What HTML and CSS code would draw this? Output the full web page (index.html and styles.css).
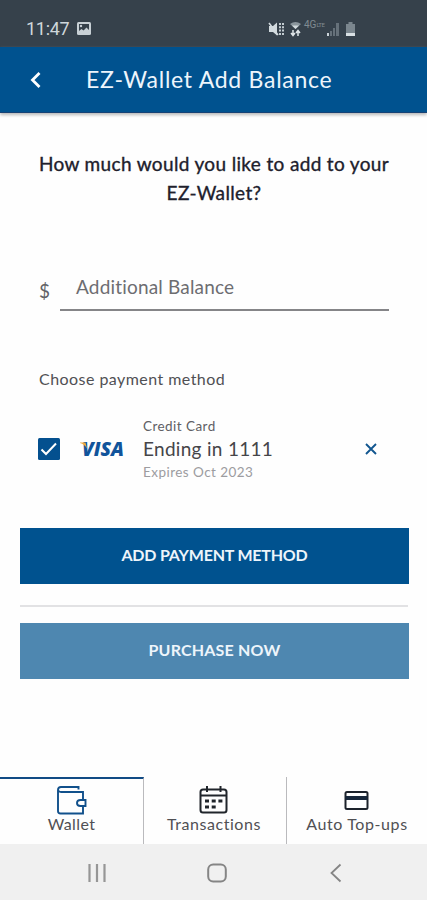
FILE: index.html
```html
<!DOCTYPE html>
<html lang="en">
<head>
<meta charset="utf-8">
<title>EZ-Wallet Add Balance</title>
<link rel="stylesheet" href="styles.css">
</head>
<body>
<div class="status">
  <span class="time">11:47</span>
  <svg class="photo" width="16" height="15" viewBox="0 0 16 15"><rect x="1" y="1" width="14" height="13" rx="1.500" fill="#c8d0d5"/><path d="M3 3h10v6l-2.500-2.500-3 3L5.500 8 3 10z" fill="#36414b"/><circle cx="5" cy="5" r="1.200" fill="#c8d0d5"/></svg>
  <div class="indicators">
    <svg width="17" height="16" viewBox="0 0 17 16"><path d="M1 5h4L9 1.500v13L5 11H1z" fill="#d2dade"/><path d="M1 2l9 12" stroke="#d2dade" stroke-width="1.500"/><path d="M12 2v12M15 2v12" stroke="#c3ccd1" stroke-width="2" stroke-dasharray="2 1.300"/></svg>
    <svg width="13" height="16" viewBox="0 0 13 16"><path d="M1 3q5.500-4 11 0L6.500 8z" fill="#8b969d"/><path d="M3 4.500h7L6.500 8z" fill="#d2dade"/><path d="M4 9v5M2 12l2 2.500L6 12M9 15v-5M7 12l2-2.500 2 2.500" fill="none" stroke="#e0e6e9" stroke-width="1.500"/></svg>
    <span class="lte">4G<small>LTE</small></span>
    <svg width="14" height="16" viewBox="0 0 14 16"><path d="M1 12h2v3H1z" fill="#cbd3d8"/><path d="M4 10h2v5H4zM7 7h2v8H7zM10 2h3v13h-3z" fill="#66717a"/></svg>
    <svg class="battery" width="11" height="16" viewBox="0 0 11 16"><path d="M3.500 1h4v2H10v12H1V3h2.500z" fill="#7b868e"/><path d="M1 12h9v3H1z" fill="#d9e0e4"/></svg>
  </div>
</div>
<header class="header">
  <svg width="14" height="18" viewBox="0 0 14 18"><path d="M11.500 2L4.500 9l7 7" fill="none" stroke="#fff" stroke-width="2.800"/></svg>
  <h1>EZ-Wallet Add Balance</h1>
</header>
<main>
  <h2>How much would you like to add to your<br>EZ-Wallet?</h2>
  <div class="amount"><span class="dollar">$</span><div class="field">Additional Balance</div></div>
  <p class="choose">Choose payment method</p>
  <div class="card">
    <svg class="check" width="22" height="22" viewBox="0 0 22 22"><rect width="22" height="22" rx="1.500" fill="#04508f"/><path d="M3.500 11.500l4.500 4.500L18 5.500" fill="none" stroke="#fff" stroke-width="2"/></svg>
    <svg class="visa" width="46" height="28" viewBox="0 -5 46 28"><text x="2" y="16" textLength="42" lengthAdjust="spacingAndGlyphs">VISA</text><path d="M0 2.500h5.500l1.500 6Q4.500 4 0 3z" fill="#eeaa3d"/></svg>
    <div class="details"><span class="kind">Credit Card</span><span class="ending">Ending in 1111</span><span class="expires">Expires Oct 2023</span></div>
    <svg class="remove" width="12" height="12" viewBox="0 0 12 12"><path d="M1 1l10 10M11 1L1 11" stroke="#12568f" stroke-width="1.900"/></svg>
  </div>
  <button class="btn add">ADD PAYMENT METHOD</button>
  <hr>
  <button class="btn buy">PURCHASE NOW</button>
</main>
<nav class="tabs">
  <div class="tab active">
    <svg width="30" height="30" viewBox="0 0 30 30" fill="none" stroke="#11508b" stroke-width="1.900"><path d="M21.500 4.500V2H4Q1 2 1 5v21q0 2.500 2.500 2.500H26V21M1.500 5.500Q2 7 4 7h22v7.500"/><path d="M28.500 15H23.500Q20 15 20 18t3.500 3h5z"/></svg>
    <span>Wallet</span>
  </div>
  <div class="tab transactions">
    <svg width="30" height="30" viewBox="0 0 30 30" fill="none" stroke="#20252b" stroke-width="2"><rect x="1.500" y="4.500" width="26" height="23" rx="2.500"/><path d="M2 10.500h25M8 1v6M21.500 1v6"/><path d="M6 16h17.500M6 22h11" stroke-width="3" stroke-dasharray="4 2.700"/></svg>
    <span>Transactions</span>
  </div>
  <div class="tab topups">
    <svg width="30" height="30" viewBox="0 0 30 30"><rect x="3.500" y="7" width="22" height="17" rx="1.500" fill="none" stroke="#1c222b" stroke-width="2"/><path d="M3.500 11h22v4h-22z" fill="#17273b"/></svg>
    <span>Auto Top-ups</span>
  </div>
</nav>
<footer class="system">
  <svg width="20" height="20" viewBox="0 0 20 20"><path d="M2.500 1v18M10 1v18M17.500 1v18" stroke="#969696" stroke-width="2.200"/></svg>
  <svg width="20" height="20" viewBox="0 0 20 20"><rect x="1.200" y="1.500" width="17.600" height="17" rx="5" fill="none" stroke="#858585" stroke-width="2"/></svg>
  <svg width="20" height="20" viewBox="0 0 20 20"><path d="M14.500 1.500L5.500 10l9 8.500" fill="none" stroke="#858585" stroke-width="1.800"/></svg>
</footer>
</body>
</html>
```
FILE: styles.css
```css
* { box-sizing: border-box; }
body { margin: 0; width: 427px; height: 900px; display: flex; flex-direction: column; overflow: hidden; background: #fefefe; color: #4a4a4d; font-family: Lato, "Noto Sans", sans-serif; white-space: nowrap; }
svg { display: block; flex: none; }
h1, h2, p { margin: 0; }
.status { height: 47px; background: #36414b; display: flex; align-items: center; padding: 10px 71px 0 26px; color: #d0d7db; }
.time { font: 18px/20px Roboto, sans-serif; width: 50px; letter-spacing: -.3px; }
.indicators { margin-left: auto; display: flex; align-items: center; }
.indicators svg:nth-child(2) { margin-left: 4px; }
.lte { width: 22px; font: 10px/12px Roboto, sans-serif; color: #808b92; margin: -7px 0 0 2px; }
.lte small { font-size: 6px; vertical-align: 1px; letter-spacing: -.5px; }
.battery { margin-left: 5px; }
.header { height: 66px; background: #00528f; border-bottom: 1px solid #174275; display: flex; align-items: center; padding-left: 28px; color: #edf5fc; box-shadow: 0 2px 3px #b9b9b9; }
h1 { font-size: 23px; line-height: 30px; font-weight: 400; margin: -2px 0 0 44px; letter-spacing: .73px; }
main { flex: 1; display: flex; flex-direction: column; padding: 36px 19px 0 20px; }
h2 { color: #20202c; font-size: 19px; line-height: 29px; font-weight: 400; text-align: center; -webkit-text-stroke: .35px #20202c; letter-spacing: .35px; }
.amount { display: flex; margin: 61px 19px 0 19px; height: 43px; }
.dollar { width: 21px; padding-top: 11px; font-size: 19px; line-height: 24px; color: #626266; }
.field { flex: 1; border-bottom: 2px solid #858588; padding: 6px 16px; font-size: 19px; line-height: 26px; letter-spacing: .18px; color: #6d6d71; }
.choose { margin: 57px 0 0 19px; font-size: 16px; line-height: 22px; letter-spacing: .45px; color: #505054; }
.card { display: flex; align-items: center; height: 68px; margin: 25px 31px 0 18px; }
.visa { margin-left: 20px; }
.visa text { font: italic 800 18.500px "Open Sans", sans-serif; fill: #11549b; }
.details { display: flex; flex-direction: column; margin-left: 17px; }
.kind { font-size: 13.500px; line-height: 20px; letter-spacing: .45px; color: #606064; }
.ending { font-size: 19px; line-height: 26px; letter-spacing: .3px; color: #454549; }
.expires { font-size: 13.500px; line-height: 20px; letter-spacing: .45px; color: #9c9ca0; }
.remove { margin-left: auto; }
.btn { border: 0; padding: 0 0 2px; width: 389px; height: 56px; flex: none; color: #edf5fb; font: 700 16px/24px Lato, sans-serif; background: #00528f; text-align: center; }
.add { margin-top: 45px; letter-spacing: -.2px; }
.buy { background: #4e87b0; letter-spacing: .2px; }
hr { width: 100%; height: 2px; border: 0; margin: 21px 0 16px; background: #e2e2e4; flex: none; }
.tabs { height: 67px; display: grid; grid-template-columns: 144px 143px 140px; flex: none; }
.tab { display: flex; flex-direction: column; align-items: center; padding-top: 8px; border-right: 1px solid #bababd; font-size: 16px; line-height: 18px; letter-spacing: .4px; color: #505054; }
.tab:last-child { border-right: 0; }
.active { border-top: 2px solid #114b85; padding-top: 6px; }
.transactions { padding-right: 2px; letter-spacing: .55px; }
.topups { letter-spacing: .6px; }
.system { height: 56px; background: #f0f0f0; display: flex; justify-content: space-between; align-items: center; padding: 2px 81px 0 87px; flex: none; }
```
